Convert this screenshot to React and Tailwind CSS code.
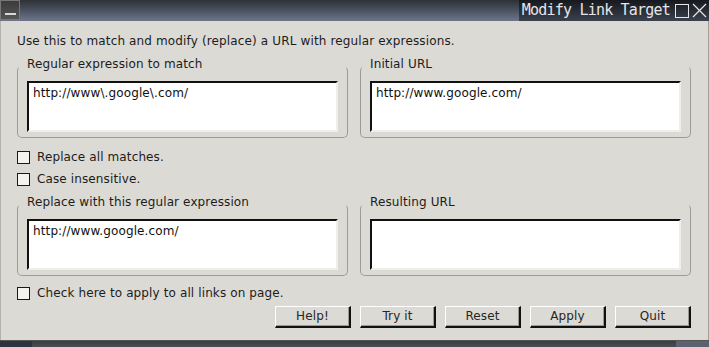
import React from 'react';

const font = { fontFamily: '"DejaVu Sans", "Liberation Sans", sans-serif' };

const TextBox = ({ value }) => (
  <div className="h-[51px] bg-white border-t-2 border-l-2 border-b-2 border-r-2 border-t-[#111] border-l-[#111] border-b-[#efeeea] border-r-[#efeeea] px-[4px] pt-[3px] text-[12px] leading-[15px] tracking-[0.12px] text-[#111]">
    {value}
  </div>
);

const Group = ({ label, value }) => (
  <div className="flex flex-col">
    <div className="h-[15px] pl-[10px] text-[12px] leading-[15px] tracking-[0.12px] text-[#1c1c1c] translate-y-[1px]">{label}</div>
    <div className="-mt-[5px] border border-[#9e9b94] border-t-transparent rounded-[5px] px-[9px] pt-[14px] pb-[5px]">
      <TextBox value={value} />
    </div>
  </div>
);

const Check = ({ label }) => (
  <label className="flex items-center gap-[7px] h-[15px] text-[12px] leading-[15px] tracking-[0.12px] text-[#1c1c1c]">
    <span className="w-[13px] h-[13px] border border-[#1a1a1a] bg-[#f4f3f0]" />
    {label}
  </label>
);

const Button = ({ children }) => (
  <button
    type="button"
    className="w-[76px] h-[22px] bg-[#dcdad5] border-t border-l border-t-white border-l-white border-b-2 border-r-2 border-b-[#111] border-r-[#111] shadow-[inset_-1px_-1px_0_#9b9994] text-[12px] leading-[15px] font-normal tracking-[0.12px] text-[#262626]"
  >
    {children}
  </button>
);

export default function App() {
  return (
    <div className="w-[709px] h-[347px] flex flex-col bg-[#dcdad5] overflow-hidden" style={font}>
      {/* title bar */}
      <div className="h-[21px] flex bg-gradient-to-b from-[#2e3136] via-[#4b5362] to-[#6e778a]">
        <div className="w-[20px] h-[20px] bg-gradient-to-b from-[#3c3c3c] to-[#555] border border-[#777] flex items-end justify-center pb-[4px]">
          <span className="w-[11px] h-[2px] bg-[#d8d8d8]" />
        </div>
        <div className="flex-1" />
        <div
          className="h-[21px] flex items-center pl-[3px] pr-[3px] bg-gradient-to-b from-[#16191e] to-[#3b4250] text-[15px] tracking-[-0.8px] text-[#e6e6e6]"
          style={{ fontFamily: '"DejaVu Sans Mono", "Liberation Mono", monospace' }}
        >
          Modify Link Target
        </div>
        <div className="w-[36px] h-[21px] flex items-center gap-[3px] pl-[2px] bg-gradient-to-b from-[#16191e] to-[#3b4250]">
          <svg width="14" height="14" viewBox="0 0 14 14">
            <rect x="0.5" y="0.5" width="13" height="13" fill="none" stroke="#e6e6e6" strokeWidth="1" />
          </svg>
          <svg width="15" height="15" viewBox="0 0 15 15">
            <path d="M1 1 L14 14 M14 1 L1 14" stroke="#e6e6e6" strokeWidth="1.2" />
          </svg>
        </div>
      </div>

      {/* body */}
      <div className="flex-1 flex flex-col pl-[17px] pr-[17px] pt-[13px] border-l border-l-[#b5b2ab] border-r border-r-[#a19e97]">
        <div className="h-[15px] -ml-[1px] text-[12px] leading-[15px] tracking-[0.14px] text-[#1c1c1c]">
          Use this to match and modify (replace) a URL with regular expressions.
        </div>

        <div className="grid grid-cols-2 gap-x-[12px] mt-[7px] -ml-[1px]">
          <Group label="Regular expression to match" value="http://www\.google\.com/" />
          <Group label="Initial URL" value="http://www.google.com/" />
        </div>

        <div className="flex flex-col gap-[7px] mt-[12px] -ml-[1px]">
          <Check label="Replace all matches." />
          <Check label="Case insensitive." />
        </div>

        <div className="grid grid-cols-2 gap-x-[12px] mt-[7px] -ml-[1px]">
          <Group label="Replace with this regular expression" value="http://www.google.com/" />
          <Group label="Resulting URL" value="" />
        </div>

        <div className="mt-[10px] -ml-[1px]">
          <Check label="Check here to apply to all links on page." />
        </div>

        <div className="flex justify-end gap-[9px] mt-[5px]">
          <Button>Help!</Button>
          <Button>Try it</Button>
          <Button>Reset</Button>
          <Button>Apply</Button>
          <Button>Quit</Button>
        </div>
      </div>

      {/* bottom edge / taskbar */}
      <div className="h-[1px] bg-[#555]" />
      <div className="h-[6px] flex">
        <div className="w-[32px] bg-[#2c3240]" />
        <div className="flex-1 bg-gradient-to-b from-[#3a3d42] to-[#4a4d52]" />
        <div className="w-[33px] bg-[#5c6270]" />
      </div>
    </div>
  );
}
